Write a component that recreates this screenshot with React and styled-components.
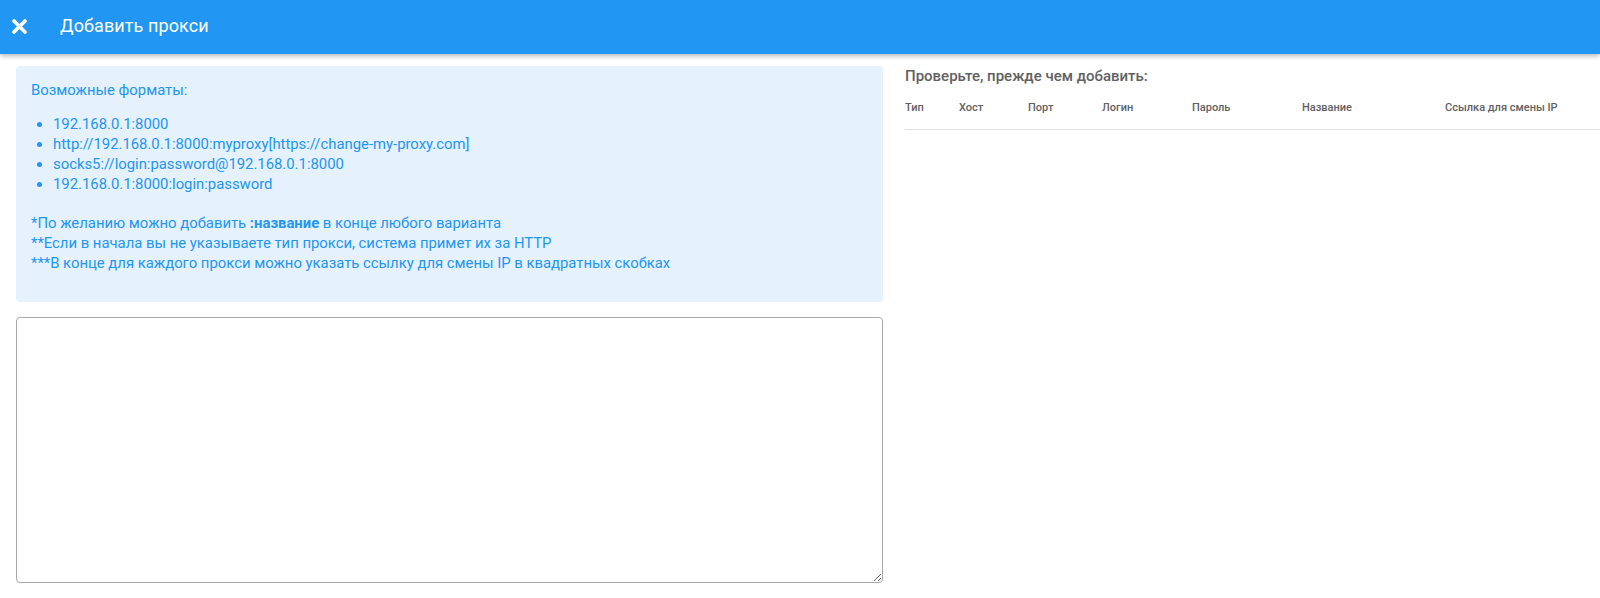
import React from "react";
import styled, { createGlobalStyle } from "styled-components";

const GlobalStyle = createGlobalStyle`
  html, body {
    margin: 0;
    padding: 0;
    background: #fff;
    font-family: Roboto, "Liberation Sans", Arial, sans-serif;
  }
  * { box-sizing: border-box; }
`;

const Page = styled.div`
  width: 1600px;
  height: 598px;
  overflow: hidden;
  display: flex;
  flex-direction: column;
`;

const TopBar = styled.header`
  height: 54px;
  flex: none;
  background: #2196f3;
  color: #fff;
  display: flex;
  align-items: center;
  padding-bottom: 2px;
  box-shadow: 0 2px 5px rgba(0, 0, 0, 0.28);
  position: relative;
  z-index: 1;
`;

const CloseButton = styled.button`
  width: 15px;
  height: 15px;
  margin: 0 33px 0 12px;
  padding: 0;
  border: 0;
  background: none;
  display: flex;
  cursor: pointer;
`;

const Title = styled.h1`
  margin: 0;
  font-size: 18px;
  font-weight: 400;
  line-height: 24px;
  letter-spacing: 0.1px;
`;

const Body = styled.main`
  flex: 1;
  display: flex;
  gap: 22px;
  padding: 12px 0 15px 16px;
`;

const LeftColumn = styled.section`
  width: 867px;
  flex: none;
  display: flex;
  flex-direction: column;
  gap: 15px;
`;

const InfoBox = styled.div`
  background: #e5f1fd;
  color: #2196f3;
  border-radius: 4px;
  padding: 14px 15px 29px;
  font-size: 14.85px;
  line-height: 20px;
`;

const FormatList = styled.ul`
  margin: 14px 0 0;
  padding-left: 22px;
`;

const Notes = styled.div`
  margin-top: 18.5px;
  b { font-weight: 700; }
`;

const ProxyInput = styled.textarea`
  flex: 1;
  width: 100%;
  border: 1px solid #a9a9a9;
  border-radius: 4px;
  resize: vertical;
  font-family: inherit;
  font-size: 14px;
  padding: 8px;
  outline: none;
`;

const RightColumn = styled.section`
  flex: 1;
  min-width: 0;
`;

const CheckTitle = styled.h2`
  margin: 0;
  font-size: 15px;
  font-weight: 500;
  color: #616161;
  line-height: 20px;
`;

const TableHead = styled.div`
  display: grid;
  grid-template-columns: 54px 69px 74px 90px 110px 143px 1fr;
  margin-top: 9px;
  padding: 6px 0 14px;
  border-bottom: 1px solid #e0e0e0;
`;

const HeadCell = styled.div`
  font-size: 11px;
  font-weight: 500;
  color: #616161;
  line-height: 14px;
  white-space: nowrap;
`;

const columns = ["Тип", "Хост", "Порт", "Логин", "Пароль", "Название", "Ссылка для смены IP"];

const formats = [
  "192.168.0.1:8000",
  "http://192.168.0.1:8000:myproxy[https://change-my-proxy.com]",
  "socks5://login:password@192.168.0.1:8000",
  "192.168.0.1:8000:login:password",
];

export default function App() {
  return (
    <Page>
      <GlobalStyle />
      <TopBar>
        <CloseButton aria-label="close">
          <svg width="15" height="15" viewBox="0 0 15 15">
            <path d="M2 2 L13 13 M13 2 L2 13" stroke="#fff" strokeWidth="3.6" strokeLinecap="round" />
          </svg>
        </CloseButton>
        <Title>Добавить прокси</Title>
      </TopBar>
      <Body>
        <LeftColumn>
          <InfoBox>
            <div>Возможные форматы:</div>
            <FormatList>
              {formats.map((f) => (
                <li key={f}>{f}</li>
              ))}
            </FormatList>
            <Notes>
              <div>
                *По желанию можно добавить <b>:название</b> в конце любого варианта
              </div>
              <div>**Если в начала вы не указываете тип прокси, система примет их за HTTP</div>
              <div>***В конце для каждого прокси можно указать ссылку для смены IP в квадратных скобках</div>
            </Notes>
          </InfoBox>
          <ProxyInput />
        </LeftColumn>
        <RightColumn>
          <CheckTitle>Проверьте, прежде чем добавить:</CheckTitle>
          <TableHead>
            {columns.map((c) => (
              <HeadCell key={c}>{c}</HeadCell>
            ))}
          </TableHead>
        </RightColumn>
      </Body>
    </Page>
  );
}
